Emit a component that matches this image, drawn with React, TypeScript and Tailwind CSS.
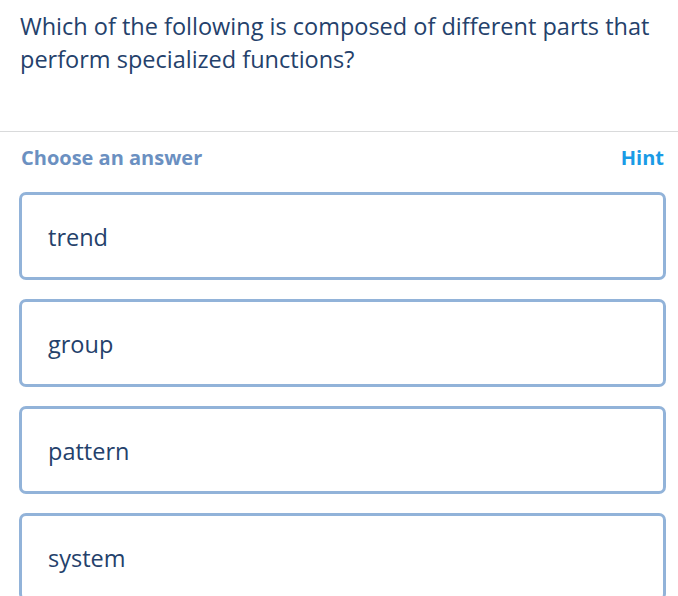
export default function App() {
  const options = ['trend', 'group', 'pattern', 'system'];

  return (
    <div className="min-h-screen bg-white font-['Open_Sans',sans-serif] overflow-hidden">
      <div className="px-[20px] pt-[10px] pb-[55px] text-[23.5px] leading-[33px] text-[#24416b]">
        Which of the following is composed of different parts that perform specialized functions?
      </div>

      <div className="border-t border-[#d9dadb]" />

      <div className="pl-[19px] pr-[12px] pt-[12px]">
        <div className="flex items-center justify-between h-[28px] pl-[2px] pr-[2px] text-[20px] font-bold">
          <span className="text-[#6b90c1]">Choose an answer</span>
          <button className="text-[#1a9be6] font-bold">Hint</button>
        </div>

        <div className="mt-[20px] flex flex-col gap-[19px]">
          {options.map((opt) => (
            <button
              key={opt}
              className="flex items-center h-[88px] w-full rounded-[7px] border-[3px] border-[#92b3d9] pl-[26px] pt-[4px] text-left text-[23.5px] text-[#24416b] bg-white"
            >
              {opt}
            </button>
          ))}
        </div>
      </div>
    </div>
  );
}
